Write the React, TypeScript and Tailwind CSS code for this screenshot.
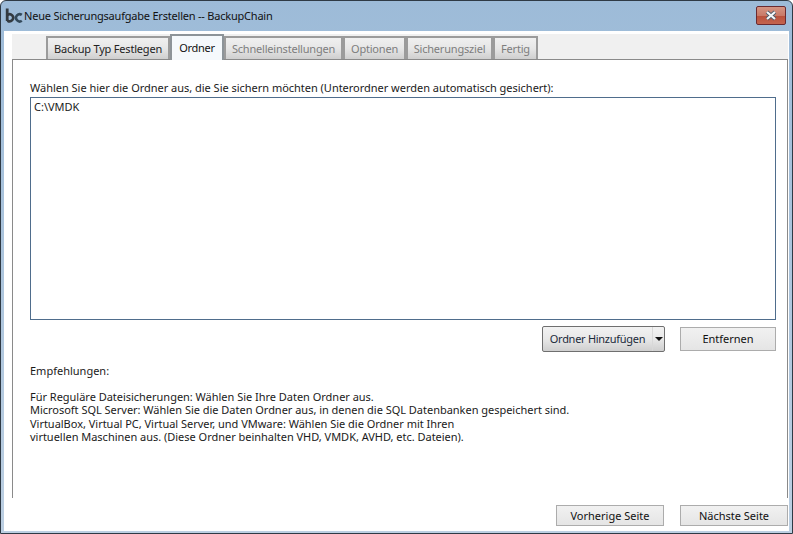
import React from 'react';

const FONT = "font-['Noto_Sans','Open_Sans',sans-serif] text-[11px] leading-[14px]";

const tabs = [
  { label: 'Backup Typ Festlegen', width: 'w-[124px]', active: false, enabled: true },
  { label: 'Ordner', width: 'w-[54px]', active: true, enabled: true },
  { label: 'Schnelleinstellungen', width: 'w-[119px]', active: false, enabled: false },
  { label: 'Optionen', width: 'w-[63px]', active: false, enabled: false },
  { label: 'Sicherungsziel', width: 'w-[87px]', active: false, enabled: false },
  { label: 'Fertig', width: 'w-[45px]', active: false, enabled: false },
];

const Tab: React.FC<{ label: string; width: string; active: boolean; enabled: boolean }> = ({
  label,
  width,
  active,
  enabled,
}) => {
  if (active) {
    return (
      <div className={`${width} h-[26px] -mb-px z-10 flex items-center justify-center border-2 border-b-0 border-[#8d9499] bg-[#f5f9fc] text-[#111] tracking-[-0.25px]`}>
        {label}
      </div>
    );
  }
  return (
    <div
      className={`${width} h-[23px] flex items-center justify-center border-2 border-b-0 border-[#9b9b9b] bg-gradient-to-b from-[#f0f0f0] via-[#e6e6e6] to-[#cfcfcf] tracking-[-0.2px] ${
        enabled ? 'text-[#222]' : 'text-[#7d7d7d]'
      }`}
    >
      {label}
    </div>
  );
};

const PlainButton: React.FC<{ label: string; size: string }> = ({ label, size }) => (
  <div
    className={`${size} flex items-center justify-center border border-[#acacac] bg-gradient-to-b from-[#f1f1f1] to-[#e5e5e5] text-[#111]`}
  >
    {label}
  </div>
);

export default function App() {
  return (
    <div className={`${FONT} w-[793px] h-[534px] flex flex-col overflow-hidden rounded-t-[6px] border border-[#2f3a45] bg-gradient-to-b from-[#9dbbd8] to-[#bccfe2] text-[#111]`}>
      {/* title bar */}
      <div className="h-[30px] shrink-0 flex items-center pl-[4px] pr-[2px]">
        <svg width="18" height="16" viewBox="0 0 18 16" className="shrink-0">
          <path d="M2.2 0.5v12.5" stroke="#333a40" strokeWidth="2.8" fill="none" />
          <path d="M2.5 7a3.5 3.5 0 1 1 0 5.6" stroke="#333a40" strokeWidth="2.6" fill="none" />
          <path d="M16.8 6.9a3.6 3.6 0 1 0 0 5.8" stroke="#33495a" strokeWidth="2.6" fill="none" />
        </svg>
        <span className="ml-[1px] text-[#111] tracking-[-0.21px]">Neue Sicherungsaufgabe Erstellen -- BackupChain</span>
        <div className="ml-auto mr-[4px] w-[30px] h-[19px] -mt-[2px] flex items-center justify-center rounded-[2px] border border-[#6b2a30] bg-[linear-gradient(to_bottom,#d49483_0%,#c97a68_50%,#b9503b_52%,#c4644f_100%)]">
          <svg width="14" height="11" viewBox="0 0 14 11">
            <path d="M3 2l8 7M11 2l-8 7" stroke="#4a5a68" strokeWidth="3.8" />
            <path d="M3 2l8 7M11 2l-8 7" stroke="#f4f6f8" strokeWidth="2.2" />
          </svg>
        </div>
      </div>

      {/* client area */}
      <div className="flex-1 ml-[3px] mr-[3px] mb-[2px] bg-white flex flex-col min-h-0">
        <div className="h-[3px] shrink-0" />
        <div className="ml-[8px] mr-[1px] flex-1 flex flex-col min-h-0">
          {/* tab strip */}
          <div className="h-[25px] shrink-0 bg-[#f0f0f0] flex items-end pl-[34px]">
            {tabs.map(t => (
              <Tab key={t.label} {...t} />
            ))}
          </div>
          {/* tab page */}
          <div className="h-[439px] shrink-0 border-t border-l border-r border-[#8a8a8a] pl-[17px] pr-[11px] text-[#1a1a1a]">
            <p className="mt-[21px] h-[14px] whitespace-nowrap tracking-[-0.02px]">
              Wählen Sie hier die Ordner aus, die Sie sichern möchten (Unterordner werden automatisch gesichert):
            </p>
            <div className="mt-[2px] h-[223px] border border-[#4f6d8c] bg-white px-[3px] py-[2px]">C:\VMDK</div>
            <div className="mt-[6px] flex justify-end gap-[15px]">
              <div className="w-[123px] h-[26px] flex rounded-[2px] border border-[#6f6f6f] bg-gradient-to-b from-[#f2f2f2] via-[#e8e8e8] to-[#cfcfcf]">
                <div className="flex-1 flex items-center justify-center text-[#1b2a3a] tracking-[-0.28px]">Ordner Hinzufügen</div>
                <div className="w-[12px] flex items-center justify-center border-l border-[#d8d8d8]">
                  <div className="w-0 h-0 border-l-[4px] border-r-[4px] border-t-[4px] border-l-transparent border-r-transparent border-t-[#111]" />
                </div>
              </div>
              <div className="mt-[1px]">
                <PlainButton label="Entfernen" size="w-[96px] h-[24px]" />
              </div>
            </div>
            <p className="mt-[12px]">Empfehlungen:</p>
            <div className="mt-[12px] leading-[13.4px] tracking-[-0.02px]">
              <p>Für Reguläre Dateisicherungen: Wählen Sie Ihre Daten Ordner aus.</p>
              <p>Microsoft SQL Server: Wählen Sie die Daten Ordner aus, in denen die SQL Datenbanken gespeichert sind.</p>
              <p>VirtualBox, Virtual PC, Virtual Server, und VMware: Wählen Sie die Ordner mit Ihren</p>
              <p>virtuellen Maschinen aus. (Diese Ordner beinhalten VHD, VMDK, AVHD, etc. Dateien).</p>
            </div>
          </div>
          {/* footer */}
          <div className="flex-1 flex items-start justify-end gap-[16px] pt-[7px]">
            <PlainButton label="Vorherige Seite" size="w-[108px] h-[21px]" />
            <PlainButton label="Nächste Seite" size="w-[108px] h-[21px]" />
          </div>
        </div>
      </div>
    </div>
  );
}
